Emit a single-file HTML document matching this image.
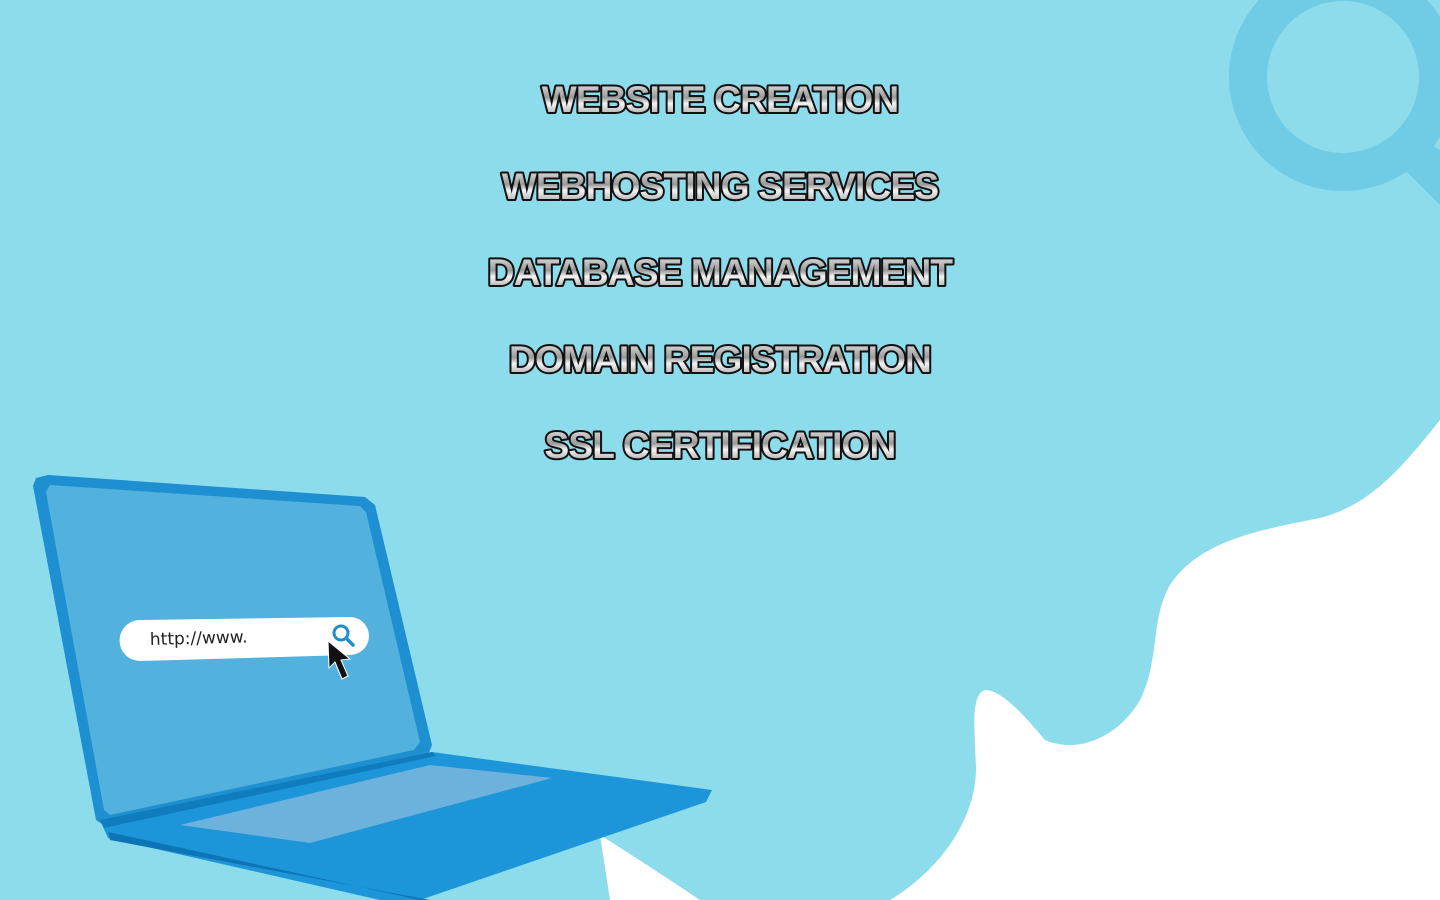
<!DOCTYPE html>
<html><head><meta charset="utf-8"><style>
html,body{margin:0;padding:0;width:1440px;height:900px;overflow:hidden;background:#8ddcec}
</style></head><body>
<svg width="1440" height="900" style="position:absolute;left:0;top:0">
<defs>
<linearGradient id="g" x1="0" y1="0" x2="0" y2="1">
<stop offset="0" stop-color="#f2f2f2"/><stop offset="0.45" stop-color="#9a9a9a"/><stop offset="0.6" stop-color="#f4f4f4"/><stop offset="1" stop-color="#8a8a8a"/>
</linearGradient>
</defs>
<circle cx="1343" cy="77" r="95" fill="none" stroke="#70cbe4" stroke-width="38"/>
<path d="M1395 160 L1440 205 L1440 150 L1415 135 Z" fill="#70cbe4"/>
<path d="M1440 420 C1400 470 1370 505 1320 518 C1260 530 1200 540 1170 585 C1150 620 1160 660 1140 700 C1120 735 1080 755 1045 740 C1020 710 1000 690 985 690 C970 695 975 730 976 770 C975 820 940 870 890 900 L1440 900 Z" fill="#ffffff"/>
<path d="M600 835 C640 860 670 880 700 900 L610 900 Z" fill="#ffffff"/>
<path d="M36 478 L48 475 L365 497 L375 505 L432 745 L427 758 L108 828 L96 820 L33 486 Z" fill="#1e8fd0"/>
<path d="M50 485 L360 506 L366 512 L420 742 L414 750 L110 815 L104 810 L46 492 Z" fill="#52b1dd"/>
<path d="M100 820 L432 752 L712 790 L706 802 L420 900 L380 900 L108 838 Z" fill="#1c96d8"/>
<path d="M108 832 L420 900 L430 900 L110 840 Z" fill="#0d74b5"/>
<path d="M180 825 L430 765 L552 778 L310 843 Z" fill="#6cb2dc"/>
<path d="M100 820 L432 752 L436 756 L104 828 Z" fill="#0f7cbe"/>
<path d="M140 620 L350 617 A19 19 0 0 1 350 655 L140 661 A20 20 0 0 1 140 620 Z" fill="#fff"/>
<text x="150" y="645" font-family="DejaVu Sans,sans-serif" font-size="17" fill="#222" transform="rotate(-1.5 150 644)">http://www.</text>
<circle cx="341" cy="633" r="7" fill="none" stroke="#1e8fd0" stroke-width="3"/>
<path d="M346 638 L353 645" stroke="#1e8fd0" stroke-width="3.5" stroke-linecap="round"/>
<path d="M328 641 L329 668 L335 662 L342 679 L348 676 L341 660 L350 659 Z" fill="#111" stroke="#fff" stroke-width="1"/>
<g font-family="Liberation Sans,Arial,sans-serif" font-weight="bold" font-size="37" text-anchor="middle" fill="url(#g)" stroke="#111" stroke-width="4" paint-order="stroke" stroke-linejoin="round" letter-spacing="-0.8">
<text x="720" y="112">WEBSITE CREATION</text>
<text x="720" y="199">WEBHOSTING SERVICES</text>
<text x="720" y="285">DATABASE MANAGEMENT</text>
<text x="720" y="372">DOMAIN REGISTRATION</text>
<text x="720" y="458">SSL CERTIFICATION</text>
</g>
</svg>
</body></html>
